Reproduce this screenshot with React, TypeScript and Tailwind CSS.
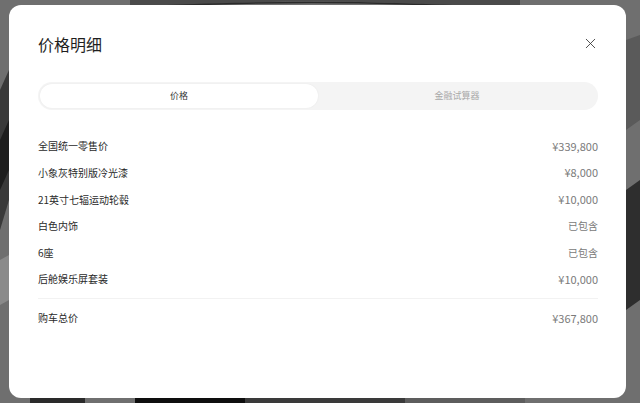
import React from 'react';
import { X } from 'lucide-react';

const rows: { label: string; value: string; included?: boolean }[] = [
  { label: '全国统一零售价', value: '¥339,800' },
  { label: '小象灰特别版冷光漆', value: '¥8,000' },
  { label: '21英寸七辐运动轮毂', value: '¥10,000' },
  { label: '白色内饰', value: '已包含', included: true },
  { label: '6座', value: '已包含', included: true },
  { label: '后舱娱乐屏套装', value: '¥10,000' },
];

// backdrop: dimmed car photo, roughly sketched
const Backdrop: React.FC = () => (
  <svg className="absolute inset-0 h-full w-full" viewBox="0 0 640 403" preserveAspectRatio="none">
    <rect width="640" height="403" fill="#6f6f6f" />
    <path d="M130 8 Q330 -6 520 10 L520 0 L130 0 Z" fill="#4a4a4a" />
    <path d="M160 6 Q330 -2 500 8" stroke="#2a2a2a" strokeWidth="1.5" fill="none" />
    <path d="M0 90 L9 70 L9 200 L0 230 Z" fill="#3a3a3a" />
    <path d="M0 140 L9 120 L9 170 L0 190 Z" fill="#1e1e1e" />
    <path d="M0 260 L9 255 L9 300 L0 305 Z" fill="#8a8a8a" />
    <path d="M626 190 L640 180 L640 300 L626 310 Z" fill="#2e2e2e" />
    <path d="M626 40 L640 35 L640 120 L626 130 Z" fill="#5a5a5a" />
    <rect x="30" y="397" width="55" height="6" fill="#2a2a2a" />
    <rect x="135" y="397" width="110" height="6" fill="#0e0e0e" />
    <rect x="245" y="397" width="160" height="6" fill="#3a3a3a" />
    <rect x="405" y="397" width="120" height="6" fill="#5d5d5d" />
  </svg>
);

const PriceDetail: React.FC = () => {
  return (
    <div
      className="relative h-[403px] w-[640px] overflow-hidden"
      style={{ fontFamily: '"Noto Sans CJK SC", "Noto Sans", sans-serif' }}
    >
      <Backdrop />
      <div className="relative pt-[5px] pr-[14px] pl-[9px]">
        <div className="h-[393px] rounded-[12px] bg-white pr-[28px] pl-[29px]">
          <div className="flex h-[77px] items-start justify-between pt-[27px]">
            <h2 className="text-[16px] leading-[24px] font-normal text-[#1f1f1f]">价格明细</h2>
            <button className="mt-[3px] mr-[-1px] text-[#333]">
              <X size={17} strokeWidth={1.2} />
            </button>
          </div>

          <div className="flex h-[28px] rounded-full bg-[#f4f4f4] p-[2px]">
            <div className="flex flex-1 items-center justify-center rounded-full bg-white text-[9px] text-[#333] shadow-[0_0_2px_rgba(0,0,0,0.06)]">
              价格
            </div>
            <div className="flex flex-1 items-center justify-center text-[9px] text-[#a8a8a8]">
              金融试算器
            </div>
          </div>

          <div className="mt-[22.7px]">
            {rows.map((row) => (
              <div key={row.label} className="flex h-[26.6px] items-center justify-between text-[10px]">
                <span className="text-[#2a2a2a]">{row.label}</span>
                <span className={row.included ? 'text-[10px] text-[#7a7a7a]' : 'text-[11px] text-[#7a7a7a]'}>
                  {row.value}
                </span>
              </div>
            ))}
          </div>

          <div className="mt-[5.7px] h-px bg-[#f2f2f2]" />

          <div className="mt-[6px] flex h-[26px] items-center justify-between text-[10px]">
            <span className="text-[#2a2a2a]">购车总价</span>
            <span className="text-[11px] text-[#7a7a7a]">¥367,800</span>
          </div>
        </div>
      </div>
    </div>
  );
};

export default function App() {
  return <PriceDetail />;
}
